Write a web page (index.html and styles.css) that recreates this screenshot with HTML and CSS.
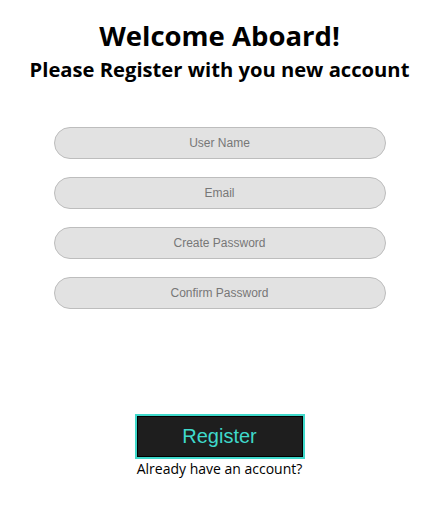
FILE: index.html
```html
<!DOCTYPE html>
<html>
<head>
<meta charset="utf-8">
<link rel="stylesheet" href="styles.css">
</head>
<body>
<div class="page">
  <h1 class="title">Welcome Aboard!</h1>
  <h2 class="subtitle">Please Register with you new account</h2>
  <form class="form">
    <input class="field" type="text" placeholder="User Name">
    <input class="field" type="email" placeholder="Email">
    <input class="field" type="password" placeholder="Create Password">
    <input class="field" type="password" placeholder="Confirm Password">
  </form>
  <div class="actions">
    <button class="register" type="button">Register</button>
    <p class="login">Already have an account?</p>
  </div>
</div>
</body>
</html>
```
FILE: styles.css
```css
html, body {
  margin: 0;
  padding: 0;
  background: #fff;
}
.page {
  width: 439px;
  display: flex;
  flex-direction: column;
  align-items: center;
  font-family: "Open Sans", "Noto Sans", sans-serif;
  color: #000;
}
.title {
  margin: 18px 0 0;
  font-size: 27.5px;
  line-height: 36px;
  font-weight: 700;
}
.subtitle {
  margin: 1px 0 0;
  font-size: 20.2px;
  line-height: 28px;
  font-weight: 700;
}
.form {
  margin-top: 44px;
  display: flex;
  flex-direction: column;
  gap: 18px;
}
.field {
  box-sizing: border-box;
  width: 332px;
  height: 32px;
  border: 1px solid #bdbdbd;
  border-radius: 16px;
  background: #e2e2e2;
  text-align: center;
  font-family: "Liberation Sans", Arial, sans-serif;
  font-size: 12px;
  outline: none;
}
.field::placeholder {
  color: #777;
}
.actions {
  margin-top: 105px;
  display: flex;
  flex-direction: column;
  align-items: center;
}
.register {
  box-sizing: border-box;
  width: 170px;
  height: 45px;
  background: #1e1e1e;
  border: 2px solid #3fd9cb;
  box-shadow: inset 0 0 0 1px #000;
  color: #3fd9cb;
  font-family: "Liberation Sans", Arial, sans-serif;
  font-size: 20px;
  padding: 0;
}
.login {
  margin: 0;
  font-size: 14px;
  line-height: 19px;
}
```
